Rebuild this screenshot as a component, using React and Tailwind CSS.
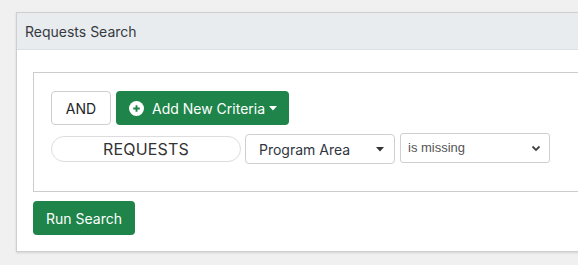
import React from "react";

export default function App() {
  return (
    <div className="w-[578px] h-[265px] overflow-hidden bg-[#f0f0f0] pt-3 pl-4" style={{ fontFamily: "Inter, 'Noto Sans', sans-serif" }}>
      <div className="w-[600px] h-[240px] bg-white border border-[#cfcfcf] shadow-[0_1px_2px_rgba(0,0,0,0.12)]">
        <div className="h-[37px] bg-[#e9ecef] border-b border-[#dcdfe3] flex items-center pl-2 text-[14px] text-[#343a40]">
          Requests Search
        </div>
        <div className="pl-4 pt-[22px]">
          <div className="h-[120px] border border-[#cccccc] border-r-0 pl-[17px] pt-[18px]">
            <div className="flex gap-[5px]">
              <button className="w-[60px] h-[34px] border border-[#cfcfcf] rounded-[4px] bg-white text-[14px] text-[#212529]">AND</button>
              <button className="w-[173px] h-[34px] rounded-[4px] bg-[#1e8449] text-white text-[14px] flex items-center pl-[13px]">
                <svg width="15" height="15" viewBox="0 0 16 16" className="mr-[8px]">
                  <circle cx="8" cy="8" r="8" fill="white" />
                  <path d="M8 4.5v7M4.5 8h7" stroke="#1e8449" strokeWidth="2" />
                </svg>
                Add New Criteria
                <svg width="8" height="5" viewBox="0 0 8 5" className="ml-[4px]">
                  <path d="M0 0h8L4 4.5z" fill="white" />
                </svg>
              </button>
            </div>
            <div className="flex items-center mt-[9px]">
              <div className="w-[190px] h-[26px] rounded-full border border-[#dddddd] flex items-center justify-center text-[16px] text-[#333] tracking-[0.2px]">REQUESTS</div>
              <div className="w-[150px] h-[30px] ml-[4px] border border-[#cfcfcf] rounded-[4px] flex items-center justify-between pl-[13px] pr-[10px] text-[14px] text-[#2f3640]">
                <span>Program Area</span>
                <svg width="8" height="5" viewBox="0 0 8 5">
                  <path d="M0 0h8L4 4.5z" fill="#333" />
                </svg>
              </div>
              <div className="w-[150px] h-[30px] ml-[5px] -mt-[2px] border border-[#cfcfcf] rounded-[3px] flex items-center justify-between pl-[7px] pr-[8px] text-[13px] text-[#555]" style={{ fontFamily: "'Liberation Sans', Arial, sans-serif" }}>
                <span className="-mt-[1px]">is missing</span>
                <svg width="10" height="7" viewBox="0 0 10 7">
                  <path d="M1.5 1.5L5 5l3.5-3.5" stroke="#444" strokeWidth="1.8" fill="none" />
                </svg>
              </div>
            </div>
          </div>
          <button className="mt-[9px] w-[102px] h-[34px] rounded-[4px] bg-[#1e8449] text-white text-[14px]">Run Search</button>
        </div>
      </div>
    </div>
  );
}
